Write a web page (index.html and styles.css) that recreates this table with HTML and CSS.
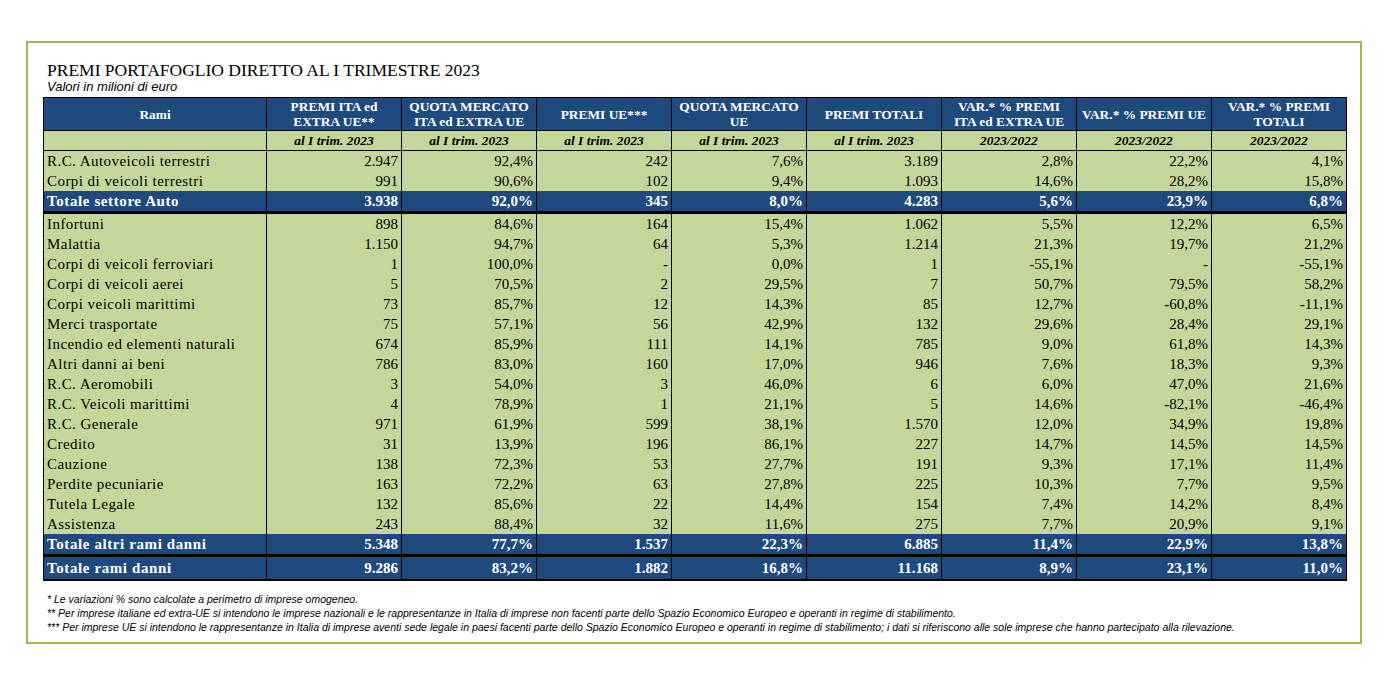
FILE: index.html
```html
<!DOCTYPE html>
<html lang="it">
<head>
<meta charset="utf-8">
<title>Premi portafoglio diretto</title>
<link rel="stylesheet" href="styles.css">
</head>
<body>
<div class="frame">
  <h1 class="title">PREMI PORTAFOGLIO DIRETTO AL I TRIMESTRE 2023</h1>
  <p class="subtitle">Valori in milioni di euro</p>
  <table class="premi">
    <colgroup>
      <col class="c-rami">
      <col class="c-num"><col class="c-num"><col class="c-num"><col class="c-num">
      <col class="c-num"><col class="c-num"><col class="c-num"><col class="c-num">
    </colgroup>
    <thead>
      <tr class="head1">
        <th>Rami</th>
        <th>PREMI ITA ed<br>EXTRA UE**</th>
        <th>QUOTA MERCATO<br>ITA ed EXTRA UE</th>
        <th>PREMI UE***</th>
        <th>QUOTA MERCATO<br>UE</th>
        <th>PREMI TOTALI</th>
        <th>VAR.* % PREMI<br>ITA ed EXTRA UE</th>
        <th>VAR.* % PREMI UE</th>
        <th>VAR.* % PREMI<br>TOTALI</th>
      </tr>
      <tr class="head2">
        <th></th>
        <th>al I trim. 2023</th>
        <th>al I trim. 2023</th>
        <th>al I trim. 2023</th>
        <th>al I trim. 2023</th>
        <th>al I trim. 2023</th>
        <th>2023/2022</th>
        <th>2023/2022</th>
        <th>2023/2022</th>
      </tr>
    </thead>
    <tbody>
      <tr><td>R.C. Autoveicoli terrestri</td><td>2.947</td><td>92,4%</td><td>242</td><td>7,6%</td><td>3.189</td><td>2,8%</td><td>22,2%</td><td>4,1%</td></tr>
      <tr><td>Corpi di veicoli terrestri</td><td>991</td><td>90,6%</td><td>102</td><td>9,4%</td><td>1.093</td><td>14,6%</td><td>28,2%</td><td>15,8%</td></tr>
      <tr class="total total-auto"><td>Totale settore Auto</td><td>3.938</td><td>92,0%</td><td>345</td><td>8,0%</td><td>4.283</td><td>5,6%</td><td>23,9%</td><td>6,8%</td></tr>
      <tr><td>Infortuni</td><td>898</td><td>84,6%</td><td>164</td><td>15,4%</td><td>1.062</td><td>5,5%</td><td>12,2%</td><td>6,5%</td></tr>
      <tr><td>Malattia</td><td>1.150</td><td>94,7%</td><td>64</td><td>5,3%</td><td>1.214</td><td>21,3%</td><td>19,7%</td><td>21,2%</td></tr>
      <tr><td>Corpi di veicoli ferroviari</td><td>1</td><td>100,0%</td><td>-</td><td>0,0%</td><td>1</td><td>-55,1%</td><td>-</td><td>-55,1%</td></tr>
      <tr><td>Corpi di veicoli aerei</td><td>5</td><td>70,5%</td><td>2</td><td>29,5%</td><td>7</td><td>50,7%</td><td>79,5%</td><td>58,2%</td></tr>
      <tr><td>Corpi veicoli marittimi</td><td>73</td><td>85,7%</td><td>12</td><td>14,3%</td><td>85</td><td>12,7%</td><td>-60,8%</td><td>-11,1%</td></tr>
      <tr><td>Merci trasportate</td><td>75</td><td>57,1%</td><td>56</td><td>42,9%</td><td>132</td><td>29,6%</td><td>28,4%</td><td>29,1%</td></tr>
      <tr><td>Incendio ed elementi naturali</td><td>674</td><td>85,9%</td><td>111</td><td>14,1%</td><td>785</td><td>9,0%</td><td>61,8%</td><td>14,3%</td></tr>
      <tr><td>Altri danni ai beni</td><td>786</td><td>83,0%</td><td>160</td><td>17,0%</td><td>946</td><td>7,6%</td><td>18,3%</td><td>9,3%</td></tr>
      <tr><td>R.C. Aeromobili</td><td>3</td><td>54,0%</td><td>3</td><td>46,0%</td><td>6</td><td>6,0%</td><td>47,0%</td><td>21,6%</td></tr>
      <tr><td>R.C. Veicoli marittimi</td><td>4</td><td>78,9%</td><td>1</td><td>21,1%</td><td>5</td><td>14,6%</td><td>-82,1%</td><td>-46,4%</td></tr>
      <tr><td>R.C. Generale</td><td>971</td><td>61,9%</td><td>599</td><td>38,1%</td><td>1.570</td><td>12,0%</td><td>34,9%</td><td>19,8%</td></tr>
      <tr><td>Credito</td><td>31</td><td>13,9%</td><td>196</td><td>86,1%</td><td>227</td><td>14,7%</td><td>14,5%</td><td>14,5%</td></tr>
      <tr><td>Cauzione</td><td>138</td><td>72,3%</td><td>53</td><td>27,7%</td><td>191</td><td>9,3%</td><td>17,1%</td><td>11,4%</td></tr>
      <tr><td>Perdite pecuniarie</td><td>163</td><td>72,2%</td><td>63</td><td>27,8%</td><td>225</td><td>10,3%</td><td>7,7%</td><td>9,5%</td></tr>
      <tr><td>Tutela Legale</td><td>132</td><td>85,6%</td><td>22</td><td>14,4%</td><td>154</td><td>7,4%</td><td>14,2%</td><td>8,4%</td></tr>
      <tr><td>Assistenza</td><td>243</td><td>88,4%</td><td>32</td><td>11,6%</td><td>275</td><td>7,7%</td><td>20,9%</td><td>9,1%</td></tr>
      <tr class="total total-altri"><td>Totale altri rami danni</td><td>5.348</td><td>77,7%</td><td>1.537</td><td>22,3%</td><td>6.885</td><td>11,4%</td><td>22,9%</td><td>13,8%</td></tr>
      <tr class="total total-danni"><td>Totale rami danni</td><td>9.286</td><td>83,2%</td><td>1.882</td><td>16,8%</td><td>11.168</td><td>8,9%</td><td>23,1%</td><td>11,0%</td></tr>
    </tbody>
  </table>
  <div class="notes">
    <p>* Le variazioni % sono calcolate a perimetro di imprese omogeneo.</p>
    <p>** Per imprese italiane ed extra-UE si intendono le imprese nazionali e le rappresentanze in Italia di imprese non facenti parte dello Spazio Economico Europeo e operanti in regime di stabilimento.</p>
    <p>*** Per imprese UE si intendono le rappresentanze in Italia di imprese aventi sede legale in paesi facenti parte dello Spazio Economico Europeo e operanti in regime di stabilimento; i dati si riferiscono alle sole imprese che hanno partecipato alla rilevazione.</p>
  </div>
</div>
</body>
</html>
```
FILE: styles.css
```css
html, body {
  margin: 0;
  padding: 0;
  background: #ffffff;
}

.frame {
  box-sizing: border-box;
  margin: 41px 0 0 26px;
  width: 1336px;
  height: 603px;
  border: 2px solid #9bbb59;
  padding: 17px 0 0 15px;
}

.title {
  margin: 0 0 0 4px;
  font-family: "Liberation Serif", "Times New Roman", serif;
  font-weight: normal;
  font-size: 17.5px;
  line-height: 20px;
  color: #000;
}

.subtitle {
  margin: 0 0 0 4px;
  font-family: "Liberation Sans", Arial, sans-serif;
  font-style: italic;
  font-size: 13px;
  line-height: 14px;
  color: #000;
}

.premi {
  margin-top: 3px;
  border-collapse: collapse;
  table-layout: fixed;
  width: 1304px;
  border: 1px solid #000;
  font-family: "Liberation Serif", "Times New Roman", serif;
  color: #000;
}

.c-rami { width: 223px; }
.c-num { width: 135px; }

.premi th,
.premi td {
  border-left: 1px solid #000;
  border-right: 1px solid #000;
  padding: 0 3px;
  white-space: nowrap;
  overflow: hidden;
}

.head1 th {
  background: #1f4a7e;
  color: #fff;
  font-weight: bold;
  font-size: 13.4px;
  line-height: 15px;
  height: 32px;
  text-align: center;
  border-bottom: 1px solid #000;
}

.head2 th {
  background: #c4d79b;
  font-weight: bold;
  font-style: italic;
  font-size: 13.5px;
  line-height: 19px;
  height: 19px;
  text-align: center;
  border-bottom: 1px solid #000;
}

.premi tbody td {
  background: #c4d79b;
  font-size: 15px;
  line-height: 20px;
  height: 20px;
  text-align: right;
}

.premi tbody td:first-child {
  text-align: left;
  letter-spacing: 0.45px;
}

.premi tbody tr.total td {
  background: #1f4a7e;
  color: #fff;
  font-weight: bold;
}

.premi tbody tr.total td:first-child {
  letter-spacing: 0.6px;
}

.premi tbody tr.total-auto td {
  border-bottom: 3px solid #000;
}

.premi tbody tr.total-altri td {
  border-bottom: 3px solid #000;
}

.premi tbody tr.total-danni td {
  height: 22px;
  line-height: 22px;
  border-bottom: 2px solid #000;
}

.notes {
  margin: 11px 0 0 4px;
  font-family: "Liberation Sans", Arial, sans-serif;
  font-style: italic;
  font-size: 10.5px;
  line-height: 14px;
  color: #000;
}

.notes p {
  margin: 0;
}
```
